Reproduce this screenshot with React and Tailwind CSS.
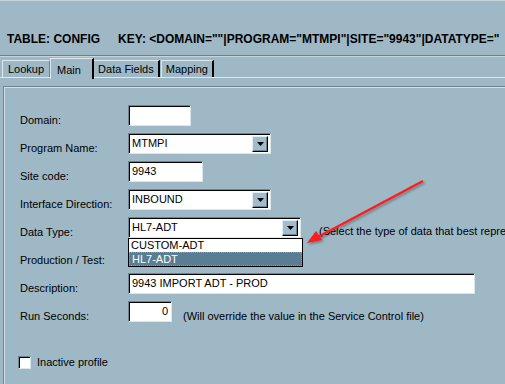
import React from "react";

const sunken =
  "bg-white border border-t-[#6b8797] border-l-[#6b8797] border-b-[#dce7ed] border-r-[#dce7ed] shadow-[inset_1px_1px_0_#000]";

function Input({ w, text, right }) {
  return (
    <div
      className={`${sunken} shrink-0 h-[21px] flex items-center px-[3px] text-[11px] leading-none text-black ${right ? "justify-end" : ""}`}
      style={{ width: w }}
    >
      {text}
    </div>
  );
}

function Select({ w, text }) {
  return (
    <div
      className={`${sunken} shrink-0 h-[21px] flex items-center justify-between pl-[3px] pr-[2px] text-[11px] leading-none text-black`}
      style={{ width: w }}
    >
      <span>{text}</span>
      <div className="w-[16px] h-[16px] bg-[#a3bccb] border border-t-[#e4edf2] border-l-[#e4edf2] border-b-black border-r-black shadow-[inset_-1px_-1px_0_#6b8797] flex items-center justify-center">
        <svg width="7" height="4" viewBox="0 0 7 4">
          <path d="M0 0h7L3.5 4z" fill="#000" />
        </svg>
      </div>
    </div>
  );
}

function Row({ label, children }) {
  return (
    <div className="flex items-start h-[21px]">
      <div className="w-[108px] shrink-0 pt-[9px] text-[11px] leading-[13px] text-black">{label}</div>
      {children}
    </div>
  );
}

export default function App() {
  return (
    <div
      className="w-[505px] h-[384px] overflow-hidden bg-[#9fb8c6] relative"
      style={{ fontFamily: '"Liberation Sans", Arial, sans-serif' }}
    >
      <div className="h-[1px] bg-[#c6d6df]" />
      {/* header */}
      <div className="h-[54px] flex items-end pb-[10px] pl-[7px] whitespace-nowrap text-[12px] font-bold text-black leading-none">
        <span>TABLE: CONFIG</span>
        <span className="ml-[18px]">KEY: &lt;DOMAIN=""|PROGRAM="MTMPI"|SITE="9943"|DATATYPE="</span>
      </div>
      <div className="h-[1px] bg-[#5f8399]" />
      <div className="h-[1px] bg-[#c6d6df]" />
      {/* tabs */}
      <div className="relative h-[21px]">
        <div className="absolute left-0 right-0 bottom-0 h-[1px] bg-[#dce7ed]" />
        <div className="flex items-end h-full pl-[2px] text-[11px] text-black">
          <div className="h-[18px] px-[5px] flex items-center border-t border-l border-[#dce7ed] border-r border-r-[#6b8797]">Lookup</div>
          <div className="h-[21px] w-[44px] pl-[6px] pt-[3px] bg-[#9fb8c6] border-t border-l border-[#dce7ed] border-r-2 border-r-black relative z-10 -mb-[1px]">Main</div>
          <div className="h-[18px] px-[4px] flex items-center border-t border-[#dce7ed] border-r-2 border-r-black">Data Fields</div>
          <div className="h-[18px] px-[4px] ml-[1px] flex items-center border-t border-l border-[#dce7ed] border-r-2 border-r-black">Mapping</div>
        </div>
      </div>
      {/* panel */}
      <div className="mt-[8px] ml-[3px] h-[320px] border-t border-l border-[#6b8797] shadow-[inset_1px_1px_0_#d2e0e8]">
        <div className="pt-[18px] pl-[16px] flex flex-col gap-[7px]">
          <Row label="Domain:">
            <Input w={63} text="" />
          </Row>
          <Row label="Program Name:">
            <Select w={143} text="MTMPI" />
          </Row>
          <Row label="Site code:">
            <Input w={75} text="9943" />
          </Row>
          <Row label="Interface Direction:">
            <Select w={143} text="INBOUND" />
          </Row>
          <Row label="Data Type:">
            <Select w={173} text="HL7-ADT" />
            <div className="ml-[18px] pt-[8px] text-[11px] leading-[13px] whitespace-nowrap text-black">
              (Select the type of data that best repres
            </div>
          </Row>
          <Row label="Production / Test:">
            <div />
          </Row>
          <Row label="Description:">
            <Input w={347} text="9943 IMPORT ADT - PROD" />
          </Row>
          <Row label="Run Seconds:">
            <Input w={44} text="0" right />
            <div className="ml-[11px] pt-[9px] text-[11px] leading-[13px] whitespace-nowrap text-black">
              (Will override the value in the Service Control file)
            </div>
          </Row>
          <div className="mt-[27px] flex items-center -ml-[2px]">
            <div className={`${sunken} w-[13px] h-[13px]`} />
            <span className="ml-[6px] text-[11px] text-black leading-none">Inactive profile</span>
          </div>
        </div>
      </div>

      {/* open dropdown list */}
      <div className="absolute left-[128px] top-[238px] w-[175px] h-[29px] bg-white border border-black text-[11px] leading-none z-20">
        <div className="h-[13px] pl-[2px] flex items-center text-black">CUSTOM-ADT</div>
        <div className="h-[14px] pl-[2px] flex items-center bg-[#5a7d94] text-white border border-dotted border-[#d08a5a]">HL7-ADT</div>
      </div>

      {/* red arrow */}
      <svg className="absolute left-0 top-0 z-30" width="505" height="384" viewBox="0 0 505 384">
        <defs>
          <filter id="sh" x="-20%" y="-20%" width="140%" height="140%">
            <feDropShadow dx="1.5" dy="1.5" stdDeviation="1" floodColor="#000" floodOpacity="0.35" />
          </filter>
        </defs>
        <g filter="url(#sh)">
          <line x1="423" y1="181" x2="318" y2="237" stroke="#ff1a1a" strokeWidth="2" />
          <path d="M307 243 L316 231 L322 240 Z" fill="#ff1a1a" />
        </g>
      </svg>
    </div>
  );
}
